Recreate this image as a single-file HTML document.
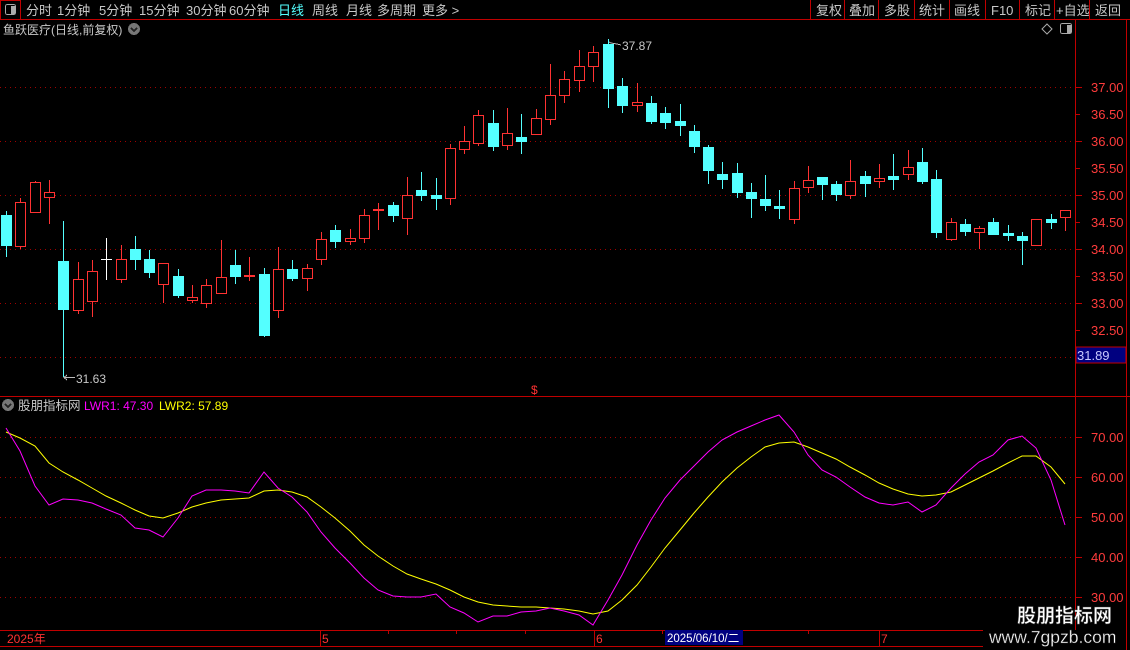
<!DOCTYPE html>
<html><head><meta charset="utf-8">
<style>
html,body{margin:0;padding:0;background:#000;width:1130px;height:650px;overflow:hidden;font-family:"Liberation Sans","Noto Sans CJK SC",sans-serif;}
svg{display:block}
text{font-family:"Liberation Sans","Noto Sans CJK SC",sans-serif;}
</style></head><body>
<svg width="1130" height="650" viewBox="0 0 1130 650" xmlns="http://www.w3.org/2000/svg" shape-rendering="crispEdges">
<rect width="1130" height="650" fill="#000"/>
<!-- toolbar -->
<line x1="0" y1="19.5" x2="1130" y2="19.5" stroke="#c00000"/>
<rect x="0.5" y="0.5" width="20" height="19" fill="none" stroke="#c00000"/>
<rect x="5.5" y="4.5" width="10" height="10" rx="2" fill="none" stroke="#aaa"/>
<rect x="11" y="6" width="4" height="8" fill="#aaa"/>
<g font-size="13" fill="#c8c8c8">
<text x="26" y="15">分时</text><text x="57" y="15">1分钟</text><text x="99" y="15">5分钟</text>
<text x="139" y="15">15分钟</text><text x="186" y="15">30分钟</text><text x="229" y="15">60分钟</text>
<text x="278" y="15" fill="#54ffff">日线</text><text x="312" y="15">周线</text><text x="346" y="15">月线</text>
<text x="377" y="15">多周期</text><text x="422" y="15">更多 &gt;</text>
<text x="816" y="15">复权</text><text x="849" y="15">叠加</text><text x="884" y="15">多股</text>
<text x="919" y="15">统计</text><text x="954" y="15">画线</text><text x="991" y="15">F10</text>
<text x="1025" y="15">标记</text><text x="1056" y="15">+自选</text><text x="1095" y="15">返回</text>
</g>
<g stroke="#c00000">
<line x1="810.5" y1="0" x2="810.5" y2="19"/><line x1="844.5" y1="0" x2="844.5" y2="19"/><line x1="878.5" y1="0" x2="878.5" y2="19"/>
<line x1="914.5" y1="0" x2="914.5" y2="19"/><line x1="949.5" y1="0" x2="949.5" y2="19"/><line x1="985.5" y1="0" x2="985.5" y2="19"/>
<line x1="1019.5" y1="0" x2="1019.5" y2="19"/><line x1="1054.5" y1="0" x2="1054.5" y2="19"/><line x1="1089.5" y1="0" x2="1089.5" y2="19"/>
</g>
<!-- header -->
<text x="3" y="34" font-size="12" fill="#c8c8c8">鱼跃医疗(日线,前复权)</text>
<circle cx="134" cy="29" r="6" fill="#777"/><path d="M131 28 L134 31 L137 28" stroke="#222" stroke-width="1.5" fill="none"/>
<path d="M1047 24 L1052 29 L1047 34 L1042 29 Z" fill="none" stroke="#aaa" shape-rendering="auto"/>
<rect x="1060.5" y="23.5" width="11" height="10" rx="2" fill="none" stroke="#aaa"/><rect x="1067" y="25" width="4" height="8" fill="#aaa"/>
<!-- right axis -->
<line x1="1075.5" y1="20" x2="1075.5" y2="630" stroke="#c00000"/>
<line x1="1126.5" y1="20" x2="1126.5" y2="650" stroke="#c00000"/>
<line x1="0" y1="396.5" x2="1130" y2="396.5" stroke="#c00000"/>
<g stroke="#a00000" stroke-dasharray="1,4">
<line x1="0" y1="87.5" x2="1075" y2="87.5"/><line x1="0" y1="141.5" x2="1075" y2="141.5"/><line x1="0" y1="195.5" x2="1075" y2="195.5"/>
<line x1="0" y1="249.5" x2="1075" y2="249.5"/><line x1="0" y1="303.5" x2="1075" y2="303.5"/><line x1="0" y1="357.5" x2="1075" y2="357.5"/>
<line x1="0" y1="437.5" x2="1075" y2="437.5"/><line x1="0" y1="477.5" x2="1075" y2="477.5"/><line x1="0" y1="517.5" x2="1075" y2="517.5"/>
<line x1="0" y1="557.5" x2="1075" y2="557.5"/><line x1="0" y1="597.5" x2="1075" y2="597.5"/>
</g>
<g stroke="#c00000">
<line x1="1076" y1="87.5" x2="1082" y2="87.5"/><line x1="1076" y1="114.5" x2="1080" y2="114.5"/><line x1="1076" y1="141.5" x2="1082" y2="141.5"/>
<line x1="1076" y1="168.5" x2="1080" y2="168.5"/><line x1="1076" y1="195.5" x2="1082" y2="195.5"/><line x1="1076" y1="222.5" x2="1080" y2="222.5"/>
<line x1="1076" y1="249.5" x2="1082" y2="249.5"/><line x1="1076" y1="276.5" x2="1080" y2="276.5"/><line x1="1076" y1="303.5" x2="1082" y2="303.5"/>
<line x1="1076" y1="330.5" x2="1080" y2="330.5"/>
<line x1="1076" y1="437.5" x2="1082" y2="437.5"/><line x1="1076" y1="477.5" x2="1082" y2="477.5"/><line x1="1076" y1="517.5" x2="1082" y2="517.5"/>
<line x1="1076" y1="557.5" x2="1082" y2="557.5"/><line x1="1076" y1="597.5" x2="1082" y2="597.5"/>
</g>
<g font-size="13" fill="#ff3c3c">
<text x="1091" y="92">37.00</text><text x="1091" y="119">36.50</text><text x="1091" y="146">36.00</text>
<text x="1091" y="173">35.50</text><text x="1091" y="200">35.00</text><text x="1091" y="227">34.50</text>
<text x="1091" y="254">34.00</text><text x="1091" y="281">33.50</text><text x="1091" y="308">33.00</text>
<text x="1091" y="335">32.50</text>
<text x="1091" y="442">70.00</text><text x="1091" y="482">60.00</text><text x="1091" y="522">50.00</text>
<text x="1091" y="562">40.00</text><text x="1091" y="602">30.00</text>
</g>
<rect x="1076" y="347" width="50" height="16" fill="#000080" stroke="#c00000"/>
<text x="1077" y="360" font-size="13" fill="#c8c8ff">31.89</text>
<!-- candles red -->
<g stroke="#ff3232" fill="#000">
<line x1="20.5" y1="198" x2="20.5" y2="249"/><rect x="15.5" y="202.5" width="10" height="44"/>
<line x1="35.5" y1="181" x2="35.5" y2="212"/><rect x="30.5" y="182.5" width="10" height="30"/>
<line x1="49.5" y1="180" x2="49.5" y2="224"/><rect x="44.5" y="192.5" width="10" height="5"/>
<line x1="78.5" y1="262" x2="78.5" y2="314"/><rect x="73.5" y="279.5" width="10" height="31"/>
<line x1="92.5" y1="260" x2="92.5" y2="317"/><rect x="87.5" y="271.5" width="10" height="30"/>
<line x1="121.5" y1="245" x2="121.5" y2="283"/><rect x="116.5" y="259.5" width="10" height="20"/>
<line x1="163.5" y1="263" x2="163.5" y2="303"/><rect x="158.5" y="263.5" width="10" height="21"/>
<line x1="192.5" y1="285" x2="192.5" y2="303"/><rect x="187.5" y="297.5" width="10" height="3"/>
<line x1="206.5" y1="279" x2="206.5" y2="308"/><rect x="201.5" y="285.5" width="10" height="18"/>
<line x1="221.5" y1="240" x2="221.5" y2="293"/><rect x="216.5" y="277.5" width="10" height="16"/>
<line x1="249.5" y1="257" x2="249.5" y2="281"/><rect x="244.5" y="275.5" width="10" height="1"/>
<line x1="278.5" y1="247" x2="278.5" y2="318"/><rect x="273.5" y="269.5" width="10" height="41"/>
<line x1="307.5" y1="264" x2="307.5" y2="291"/><rect x="302.5" y="268.5" width="10" height="10"/>
<line x1="321.5" y1="232" x2="321.5" y2="265"/><rect x="316.5" y="239.5" width="10" height="20"/>
<line x1="350.5" y1="229" x2="350.5" y2="245"/><rect x="345.5" y="238.5" width="10" height="3"/>
<line x1="364.5" y1="209" x2="364.5" y2="243"/><rect x="359.5" y="215.5" width="10" height="23"/>
<line x1="378.5" y1="203" x2="378.5" y2="230"/><rect x="373.5" y="209.5" width="10" height="1"/>
<line x1="407.5" y1="177" x2="407.5" y2="235"/><rect x="402.5" y="195.5" width="10" height="23"/>
<line x1="450.5" y1="144" x2="450.5" y2="205"/><rect x="445.5" y="148.5" width="10" height="50"/>
<line x1="464.5" y1="126" x2="464.5" y2="154"/><rect x="459.5" y="141.5" width="10" height="8"/>
<line x1="478.5" y1="110" x2="478.5" y2="146"/><rect x="473.5" y="115.5" width="10" height="28"/>
<line x1="507.5" y1="108" x2="507.5" y2="150"/><rect x="502.5" y="133.5" width="10" height="12"/>
<line x1="536.5" y1="109" x2="536.5" y2="134"/><rect x="531.5" y="118.5" width="10" height="16"/>
<line x1="550.5" y1="64" x2="550.5" y2="125"/><rect x="545.5" y="95.5" width="10" height="24"/>
<line x1="564.5" y1="71" x2="564.5" y2="103"/><rect x="559.5" y="79.5" width="10" height="16"/>
<line x1="579.5" y1="50" x2="579.5" y2="92"/><rect x="574.5" y="66.5" width="10" height="14"/>
<line x1="593.5" y1="46" x2="593.5" y2="82"/><rect x="588.5" y="52.5" width="10" height="14"/>
<line x1="637.5" y1="83" x2="637.5" y2="112"/><rect x="632.5" y="102.5" width="10" height="3"/>
<line x1="794.5" y1="181" x2="794.5" y2="224"/><rect x="789.5" y="188.5" width="10" height="31"/>
<line x1="808.5" y1="166" x2="808.5" y2="193"/><rect x="803.5" y="180.5" width="10" height="7"/>
<line x1="850.5" y1="160" x2="850.5" y2="199"/><rect x="845.5" y="181.5" width="10" height="14"/>
<line x1="879.5" y1="164" x2="879.5" y2="188"/><rect x="874.5" y="178.5" width="10" height="3"/>
<line x1="908.5" y1="150" x2="908.5" y2="180"/><rect x="903.5" y="167.5" width="10" height="7"/>
<line x1="951.5" y1="218" x2="951.5" y2="241"/><rect x="946.5" y="222.5" width="10" height="17"/>
<line x1="979.5" y1="226" x2="979.5" y2="249"/><rect x="974.5" y="228.5" width="10" height="4"/>
<line x1="1036.5" y1="219" x2="1036.5" y2="246"/><rect x="1031.5" y="219.5" width="10" height="26"/>
<line x1="1065.5" y1="210" x2="1065.5" y2="231"/><rect x="1060.5" y="210.5" width="10" height="7"/>
</g>
<!-- candles cyan -->
<g stroke="#54ffff" fill="#54ffff">
<line x1="6.5" y1="211" x2="6.5" y2="257"/><rect x="1.5" y="215.5" width="10" height="30"/>
<line x1="63.5" y1="221" x2="63.5" y2="377"/><rect x="58.5" y="261.5" width="10" height="48"/>
<line x1="135.5" y1="236" x2="135.5" y2="270"/><rect x="130.5" y="249.5" width="10" height="10"/>
<line x1="149.5" y1="250" x2="149.5" y2="278"/><rect x="144.5" y="259.5" width="10" height="13"/>
<line x1="178.5" y1="269" x2="178.5" y2="298"/><rect x="173.5" y="276.5" width="10" height="19"/>
<line x1="235.5" y1="250" x2="235.5" y2="284"/><rect x="230.5" y="265.5" width="10" height="11"/>
<line x1="264.5" y1="268" x2="264.5" y2="337"/><rect x="259.5" y="274.5" width="10" height="61"/>
<line x1="292.5" y1="260" x2="292.5" y2="281"/><rect x="287.5" y="269.5" width="10" height="9"/>
<line x1="335.5" y1="225" x2="335.5" y2="248"/><rect x="330.5" y="230.5" width="10" height="11"/>
<line x1="393.5" y1="202" x2="393.5" y2="222"/><rect x="388.5" y="205.5" width="10" height="10"/>
<line x1="421.5" y1="172" x2="421.5" y2="201"/><rect x="416.5" y="190.5" width="10" height="5"/>
<line x1="436.5" y1="178" x2="436.5" y2="210"/><rect x="431.5" y="195.5" width="10" height="3"/>
<line x1="493.5" y1="110" x2="493.5" y2="151"/><rect x="488.5" y="123.5" width="10" height="23"/>
<line x1="521.5" y1="114" x2="521.5" y2="154"/><rect x="516.5" y="137.5" width="10" height="4"/>
<line x1="608.5" y1="39" x2="608.5" y2="108"/><rect x="603.5" y="44.5" width="10" height="44"/>
<line x1="622.5" y1="78" x2="622.5" y2="113"/><rect x="617.5" y="86.5" width="10" height="19"/>
<line x1="651.5" y1="96" x2="651.5" y2="124"/><rect x="646.5" y="103.5" width="10" height="18"/>
<line x1="665.5" y1="107" x2="665.5" y2="129"/><rect x="660.5" y="113.5" width="10" height="9"/>
<line x1="680.5" y1="104" x2="680.5" y2="136"/><rect x="675.5" y="121.5" width="10" height="4"/>
<line x1="694.5" y1="125" x2="694.5" y2="153"/><rect x="689.5" y="131.5" width="10" height="15"/>
<line x1="708.5" y1="145" x2="708.5" y2="184"/><rect x="703.5" y="147.5" width="10" height="23"/>
<line x1="722.5" y1="162" x2="722.5" y2="189"/><rect x="717.5" y="174.5" width="10" height="5"/>
<line x1="737.5" y1="163" x2="737.5" y2="198"/><rect x="732.5" y="173.5" width="10" height="19"/>
<line x1="751.5" y1="183" x2="751.5" y2="218"/><rect x="746.5" y="192.5" width="10" height="6"/>
<line x1="765.5" y1="175" x2="765.5" y2="211"/><rect x="760.5" y="199.5" width="10" height="6"/>
<line x1="779.5" y1="190" x2="779.5" y2="219"/><rect x="774.5" y="206.5" width="10" height="2"/>
<line x1="822.5" y1="177" x2="822.5" y2="200"/><rect x="817.5" y="177.5" width="10" height="7"/>
<line x1="836.5" y1="181" x2="836.5" y2="201"/><rect x="831.5" y="184.5" width="10" height="10"/>
<line x1="865.5" y1="171" x2="865.5" y2="197"/><rect x="860.5" y="176.5" width="10" height="7"/>
<line x1="893.5" y1="154" x2="893.5" y2="190"/><rect x="888.5" y="176.5" width="10" height="3"/>
<line x1="922.5" y1="148" x2="922.5" y2="184"/><rect x="917.5" y="162.5" width="10" height="19"/>
<line x1="936.5" y1="170" x2="936.5" y2="238"/><rect x="931.5" y="179.5" width="10" height="53"/>
<line x1="965.5" y1="219" x2="965.5" y2="236"/><rect x="960.5" y="224.5" width="10" height="7"/>
<line x1="993.5" y1="218" x2="993.5" y2="235"/><rect x="988.5" y="222.5" width="10" height="12"/>
<line x1="1008.5" y1="225" x2="1008.5" y2="241"/><rect x="1003.5" y="233.5" width="10" height="2"/>
<line x1="1022.5" y1="232" x2="1022.5" y2="265"/><rect x="1017.5" y="236.5" width="10" height="4"/>
<line x1="1051.5" y1="214" x2="1051.5" y2="229"/><rect x="1046.5" y="219.5" width="10" height="3"/>
</g>
<g stroke="#fff"><line x1="106.5" y1="238" x2="106.5" y2="280"/><line x1="101" y1="259.5" x2="112" y2="259.5"/></g>
<!-- markers -->
<g stroke="#bbb" fill="none"><line x1="64" y1="377.5" x2="75" y2="377.5"/><path d="M67 375 L64 377.5 L67 380"/>
<path d="M609 42 L611 43 L617 44 L621 45"/></g>
<text x="76" y="383" font-size="12" fill="#c8c8c8">31.63</text>
<text x="622" y="50" font-size="12" fill="#c8c8c8">37.87</text>
<text x="531" y="394" font-size="12" fill="#ff3232">$</text>
<!-- indicator header -->
<circle cx="8" cy="405" r="6" fill="#777"/><path d="M5 404 L8 407 L11 404" stroke="#222" stroke-width="1.5" fill="none"/>
<text x="18" y="410" font-size="12.5" fill="#c8c8c8">股朋指标网</text>
<text x="84" y="410" font-size="12" fill="#ff00ff">LWR1: 47.30</text>
<text x="159" y="410" font-size="12" fill="#ffff00">LWR2: 57.89</text>
<!-- lines -->
<g fill="none" stroke-width="1" shape-rendering="auto">
<polyline stroke="#ffff00" points="6,432 20,438 35,446 49,463 63,472 78,480 92,488 106,496 121,503 135,510 149,516 163,518 178,513 192,507 206,503 221,500 235,499 249,498 264,491 278,490 292,492 307,497 321,507 335,518 350,531 364,545 378,556 393,566 407,574 421,579 436,584 450,590 464,597 478,602 493,605 507,606 521,607 536,607 550,608 564,609 579,611 593,614 608,611 622,600 637,585 651,567 665,548 680,530 694,513 708,497 722,482 737,468 751,457 765,447 779,443 794,442 808,447 822,453 836,459 850,467 865,475 879,483 893,489 908,494 922,496 936,495 951,492 965,485 979,478 993,471 1008,463 1022,456 1036,456 1051,467 1065,484"/>
<polyline stroke="#ff00ff" points="6,428 20,451 35,486 49,505 63,499 78,500 92,503 106,509 121,515 135,528 149,530 163,537 178,518 192,496 206,490 221,490 235,491 249,493 264,472 278,488 292,497 307,512 321,532 335,548 350,563 364,578 378,590 393,596 407,597 421,597 436,594 450,607 464,613 478,622 493,616 507,616 521,612 536,611 550,608 564,611 579,615 593,625 608,600 622,575 637,545 651,520 665,498 680,480 694,466 708,452 722,440 737,432 751,426 765,420 779,415 794,432 808,455 822,470 836,477 850,487 865,497 879,503 893,505 908,502 922,512 936,505 951,488 965,474 979,462 993,455 1008,440 1022,436 1036,448 1051,480 1065,525"/>
</g>
<!-- date bar -->
<line x1="0" y1="630.5" x2="983" y2="630.5" stroke="#c00000"/>
<line x1="0" y1="646.5" x2="983" y2="646.5" stroke="#c00000"/>
<g stroke="#c00000"><line x1="320.5" y1="631" x2="320.5" y2="646"/><line x1="594.5" y1="631" x2="594.5" y2="646"/><line x1="879.5" y1="631" x2="879.5" y2="646"/>
<line x1="388.5" y1="631" x2="388.5" y2="634"/><line x1="456.5" y1="631" x2="456.5" y2="634"/><line x1="525.5" y1="631" x2="525.5" y2="634"/>
<line x1="662.5" y1="631" x2="662.5" y2="634"/><line x1="730.5" y1="631" x2="730.5" y2="634"/><line x1="808.5" y1="631" x2="808.5" y2="634"/></g>
<g font-size="12" fill="#ff3232"><text x="7" y="643">2025年</text><text x="322" y="643">5</text><text x="596" y="643">6</text><text x="881" y="643">7</text></g>
<rect x="665" y="630" width="78" height="15" fill="#000080"/>
<text x="667" y="642" font-size="11.5" fill="#fff">2025/06/10/二</text>
<!-- watermark -->
<text x="1017" y="622" font-size="19" font-weight="bold" fill="#fff" stroke="#333" stroke-width="0.5">股朋指标网</text>
<text x="989" y="643" font-size="17.5" fill="#fff" stroke="#333" stroke-width="0.4">www.7gpzb.com</text>
</svg>
</body></html>
